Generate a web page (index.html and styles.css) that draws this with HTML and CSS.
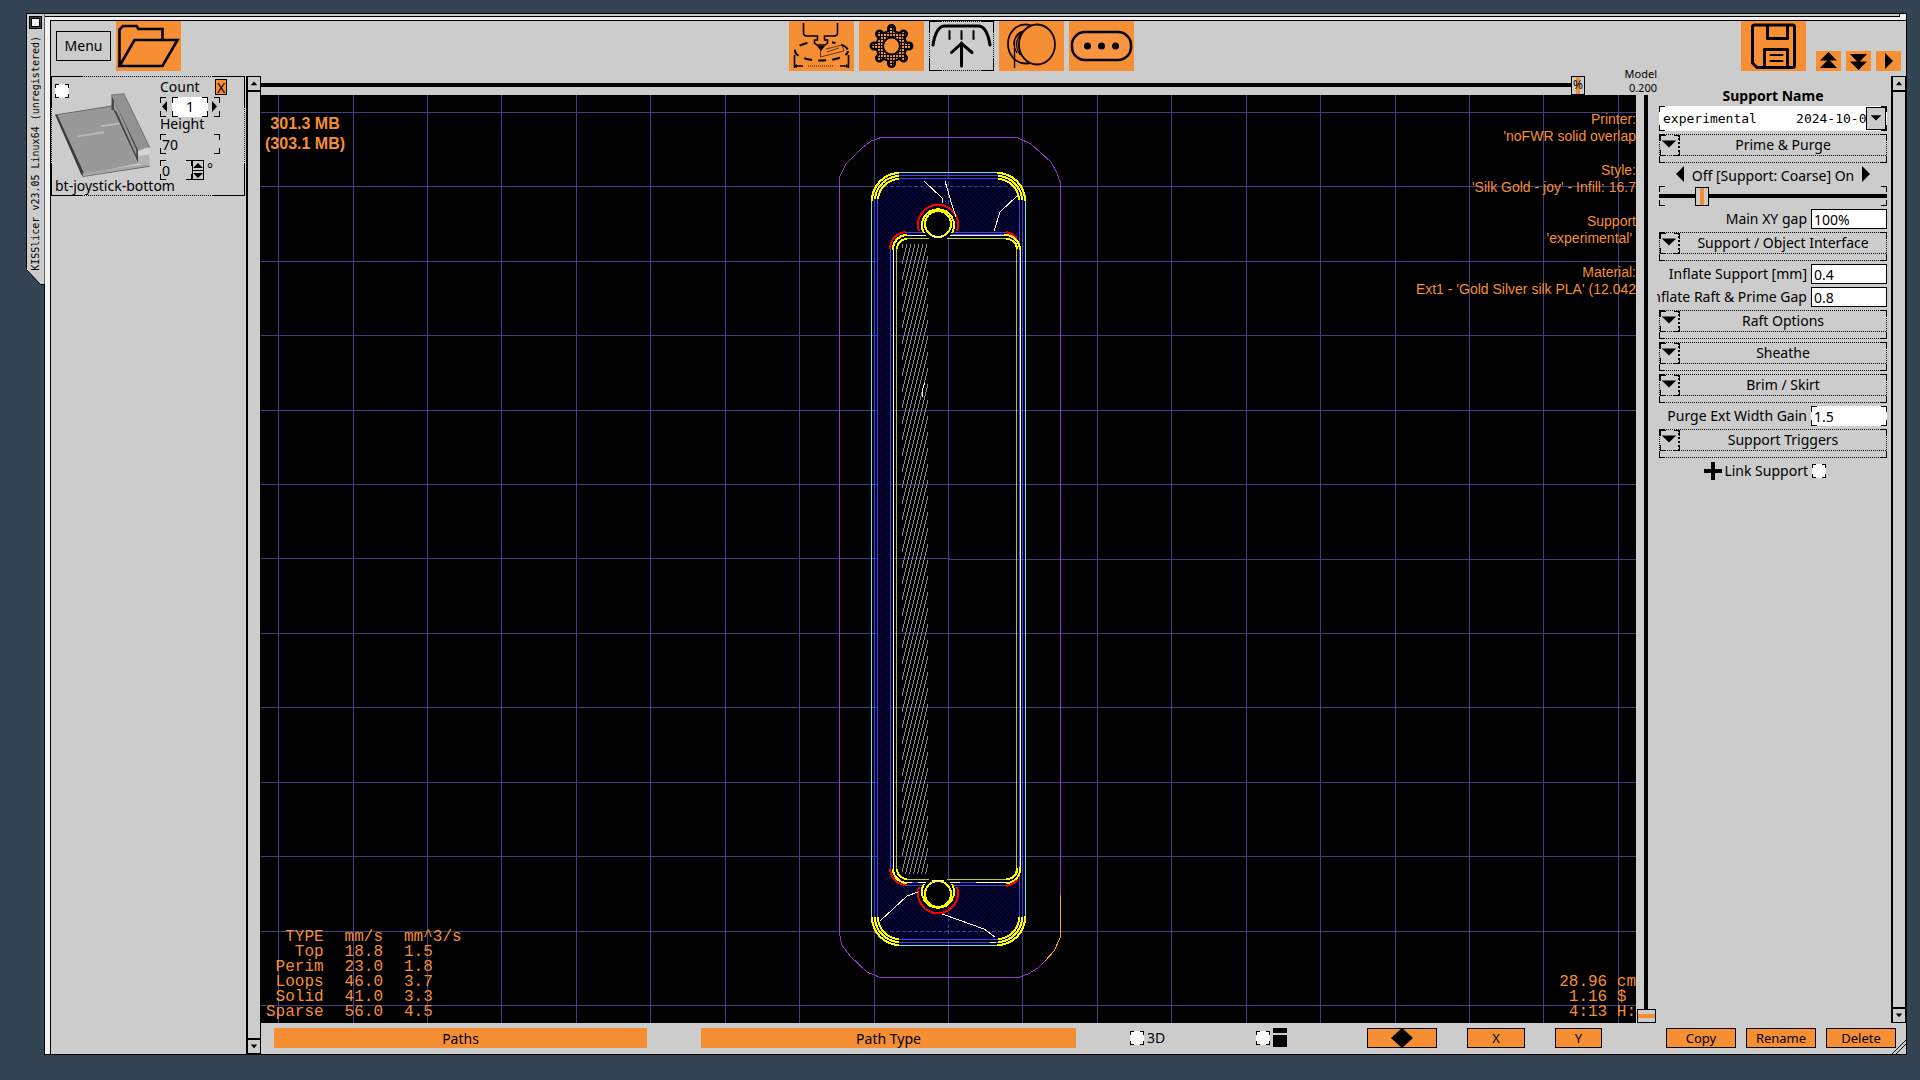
FILE: index.html
```html
<!DOCTYPE html>
<html lang="en">
  <head>
    <meta charset="UTF-8" />
    <meta name="viewport" content="width=device-width, initial-scale=1.0" />
    <title>KISSlicer v23.05 Linux64 (unregistered)</title>
    <link rel="stylesheet" href="styles.css">
  </head>
  <body>
    <div class="tab">
      <svg class="tab-shape" width="19" height="272" viewBox="0 0 19 272">
        <path d="M.5 .5H19V271.5H14.5L.5 256.5Z" fill="#ccc" stroke="#000" />
      </svg>
      <button class="tab-close" aria-label="Close window"></button>
      <div class="tab-title">KISSlicer v23.05 Linux64 (unregistered)</div>
    </div>

    <div class="window">
      <div class="strip"></div>
      <div class="content">
        <header class="toolbar">
          <button class="menu">Menu</button>
          <button class="tool" aria-label="Open">
            <svg viewBox="0 0 65 50" fill="none" stroke="#000" stroke-width="2.6">
              <path d="M3.5 45V8.5L7 5H20.5L22.5 8H46.5V19" />
              <path d="M18.5 19H61.5L46.5 45H3.5Z" />
            </svg>
          </button>

          <nav class="tabs">
            <button class="tool" aria-label="Printer">
              <svg viewBox="0 0 65 50" fill="none" stroke="#000" stroke-width="1.6">
                <ellipse cx="32.5" cy="30" rx="26.5" ry="9.5" stroke-width="2" stroke-dasharray="8 6" stroke-dashoffset="3" />
                <rect x="22" y="14" width="21" height="9" fill="#f68e33" stroke="none" />
                <path d="M14.5 2V12Q14.5 15 18 15H28.5V19H25.5V22L28 24H36L38.5 22V19H35.5V15H45Q48.5 15 48.5 12V2" />
                <path d="M28 25H36L32 30Z" fill="#000" stroke="none" />
                <path d="M37 28L53 24L55 30L31.5 36V28M38 31L50 27" stroke-width=".6" />
                <path d="M5.5 34V47M59.5 34V47M5.5 45H14M51 45H59.5" />
                <path d="M8 43V47L5 45ZM57 43V47L60 45Z" fill="#000" stroke="none" />
                <path d="M19 45H45" stroke="#8a5020" stroke-width="2" stroke-dasharray="1 1" />
              </svg>
            </button>
            <button class="tool" aria-label="Settings">
              <svg viewBox="0 0 65 50">
                <defs>
                  <pattern id="mesh" width="3" height="3" patternUnits="userSpaceOnUse">
                    <rect width="3" height="3" fill="#f68e33" />
                    <path d="M0 .5H3M.5 0V3" stroke="#000" />
                  </pattern>
                </defs>
                <g stroke="#000" stroke-width="9" stroke-linecap="round">
                  <path d="M32.5 7.5V42.5M15 25H50M20.5 13L44.5 37M20.5 37L44.5 13" />
                  <circle cx="32.5" cy="25" r="11.5" />
                </g>
                <g stroke="url(#mesh)" stroke-width="4" stroke-linecap="round" fill="url(#mesh)">
                  <path d="M32.4 7.5L32.6 42.5M15 24.9L50 25.1M20.5 13L44.5 37M20.5 37L44.5 13" />
                  <circle cx="32.5" cy="25" r="12" />
                </g>
                <circle cx="32.5" cy="25" r="8.5" fill="#f68e33" stroke="#000" stroke-width="2" />
              </svg>
            </button>
            <button class="tool tool-active frame" aria-label="Support">
              <svg viewBox="0 0 65 50" fill="none" stroke="#000" stroke-width="3" stroke-linecap="round">
                <path d="M4 24Q7 5 16 5H49Q58 5 61 24" />
                <path d="M20.5 10V18M32.5 10V18M44.5 10V18" stroke-width="2" />
                <path d="M32.5 22V45M22.5 31.5L32.5 22.5L43 31.5" />
              </svg>
            </button>
            <button class="tool" aria-label="Material">
              <svg viewBox="0 0 65 50" fill="none" stroke="#100500" stroke-width="1.8">
                <ellipse cx="26.5" cy="23" rx="17.5" ry="19.5" />
                <path d="M27 10Q12 18 21 34M28 10Q15 20 23 35M26 10Q9 17 18 32M15.5 47V20Q17 11 26 10" stroke-width="1.4" />
                <ellipse cx="38" cy="23.5" rx="18" ry="20" fill="#f68e33" />
              </svg>
            </button>
            <button class="tool" aria-label="More">
              <svg viewBox="0 0 65 50">
                <rect x="3" y="11" width="59" height="28" rx="13" fill="#f79545" stroke="#000" stroke-width="2.5" />
                <circle cx="18.5" cy="25" r="3.5" />
                <circle cx="32.5" cy="25" r="3.5" />
                <circle cx="46.5" cy="25" r="3.5" />
              </svg>
            </button>
          </nav>

          <button class="tool" aria-label="Save">
            <svg viewBox="0 0 65 50" fill="none" stroke="#000" stroke-width="3" stroke-linejoin="round">
              <path d="M13.5 4H51.5Q53.5 4 53.5 6V44.5Q53.5 46.5 51.5 46.5H16L11.5 42V6Q11.5 4 13.5 4Z" />
              <path d="M26.5 4V17.5H46.5V4M23.5 46V28.5H46.5V46" />
              <path d="M29.5 34H41.5M29.5 40H41.5" stroke-width="2" stroke-linecap="round" />
            </svg>
          </button>
          <div class="steps">
            <button aria-label="Collapse all"><svg viewBox="0 0 25 20"><path d="M12.5 1L21 9.5H4ZM12.5 8L21 17H4Z" /></svg></button>
            <button aria-label="Expand all"><svg viewBox="0 0 25 20"><path d="M12.5 19L21 10.5H4ZM12.5 12L21 3H4Z" /></svg></button>
            <button aria-label="Next"><svg viewBox="0 0 25 20"><path d="M9 2L17 10L9 18Z" /></svg></button>
          </div>
        </header>

        <div class="panes">
          <section class="objects">
            <div class="card frame">
              <div class="card-pic">
                <input type="checkbox" class="check" aria-label="Select bt-joystick-bottom">
                <svg class="part" viewBox="165 272 290 256">
                  <path d="M168 342L335 314L412 486L248 520Z" fill="#999" />
                  <path d="M166 341L336 314" stroke="#666" stroke-width="3" />
                  <path d="M165 339L172 341L252 516L248 525L243 518Z" fill="#3a3a3a" />
                  <path d="M248 514L448 486V493L248 525Z" fill="#a8a8a8" />
                  <path d="M248 525L448 494" stroke="#666" stroke-width="3" />
                  <path d="M232 405L312 392M303 374L370 364" stroke="#bbb" stroke-width="5" />
                  <path d="M334 282L346 286L414 446V486L340 326H334Z" fill="#444" />
                  <path d="M341 296L408 445V462L349 330L341 324Z" fill="#999" />
                  <path d="M333 281L371 277L448 438L414 446Z" fill="#929292" />
                  <path d="M333 281L371 277L448 438" fill="none" stroke="#777" stroke-width="3" />
                  <path d="M413 448L446 437L448 490L416 487Z" fill="#b4b4b4" />
                  <path d="M413 450L440 438L448 444V458L414 464Z" fill="#d4d4d4" />
                </svg>
              </div>
              <div class="card-form">
                <div class="count-line">
                  <label for="count">Count</label>
                  <button class="remove">X</button>
                </div>
                <div class="stepper corners">
                  <button aria-label="Fewer"><svg viewBox="0 0 12 20"><path d="M7 4V15L2 9.5Z" /></svg></button>
                  <input id="count" class="corners" value="1">
                  <button aria-label="More copies"><svg viewBox="0 0 12 20"><path d="M4 4V15L9 9.5Z" /></svg></button>
                </div>
                <label class="height-label" for="height">Height</label>
                <input id="height" class="plain corners" value="70">
                <div class="angle">
                  <input class="plain corners" value="0" aria-label="Rotation">
                  <span class="updown">
                    <button aria-label="Rotate up"><svg viewBox="0 0 10 9"><path d="M5 2L10 7H0Z" /></svg></button>
                    <button aria-label="Rotate down"><svg viewBox="0 0 10 9"><path d="M5 7L10 2H0Z" /></svg></button>
                  </span>
                  <span class="degree">°</span>
                </div>
              </div>
              <div class="card-name">bt-joystick-bottom</div>
            </div>
          </section>

          <div class="scroll">
            <button aria-label="Scroll up"><svg viewBox="0 0 13 14"><path d="M6.5 5L10 9H3Z" /></svg></button>
            <button aria-label="Scroll down"><svg viewBox="0 0 13 14"><path d="M6.5 9L10 5H3Z" /></svg></button>
          </div>

          <main class="viewer">
            <div class="progress">
              <div class="progress-slider">
                <input type="range" class="slider" min="0" max="100" value="100" aria-label="Layer progress">
                <span class="percent">%</span>
              </div>
              <div class="layer-label">Model<br>0.200</div>
            </div>

            <div class="stage">
              <div class="canvas">
                <svg class="drawing" viewBox="261 95 1375 928" preserveAspectRatio="xMidYMid slice" fill="none" shape-rendering="crispEdges">
                  <defs>
                    <pattern id="infill" width="4" height="4" patternUnits="userSpaceOnUse">
                      <rect width="4" height="4" fill="#000008" />
                      <path d="M0 .5H1M1 1.5H2M2 2.5H3M3 3.5H4" stroke="#00008c" />
                    </pattern>
                    <pattern id="hatch" width="4" height="16" patternUnits="userSpaceOnUse">
                      <path d="M3.5 0V4M2.5 4V8M1.5 8V12M.5 12V16" stroke="#888" />
                    </pattern>
                  </defs>

                  <!-- bed grid -->
                  <path class="grid" d="M278.5 95V1023M353.5 95V1023M427.5 95V1023M501.5 95V1023M576.5 95V1023M650.5 95V1023M725.5 95V1023M799.5 95V1023M874.5 95V1023M948.5 95V1023M1022.5 95V1023M1097.5 95V1023M1171.5 95V1023M1246.5 95V1023M1320.5 95V1023M1395.5 95V1023M1469.5 95V1023M1543.5 95V1023M1618.5 95V1023" />
                  <path class="grid" d="M261 112.5H1636M261 186.5H1636M261 261.5H1636M261 335.5H1636M261 410.5H1636M261 484.5H1636M261 558.5H949V559.5H1636M261 633.5H1636M261 707.5H1636M261 782.5H1636M261 856.5H1636M261 931.5H1636M261 1005.5H1636" />

                  <!-- skirt -->
                  <path d="M1045 961L1038 968L1028 974L1019 977.5H880L867 972L850 956L842 945L839.5 934V177L846 164L862 148L871 141L881 137.5H1017L1031 144L1051 162L1057 173L1060.5 183V895" stroke="#9932cc" />
                  <path d="M1060.5 895V937L1054 951L1045 961" stroke="#ffa500" />

                  <!-- solid infill around the pocket -->
                  <path fill="url(#infill)" fill-rule="evenodd" d="M899 179H998A21 21 0 0 1 1019 200V917A22 22 0 0 1 998 939H899A21 21 0 0 1 878 917V200A21 21 0 0 1 899 179ZM906 233A15 15 0 0 0 891 248V869A16 16 0 0 0 906 885H1004A15 15 0 0 0 1019 869V248A15 15 0 0 0 1004 233Z" />
                  <path d="M884 186.5H1016M884 931.5H1012M948.5 182V236M948.5 888V936" stroke="#404088" stroke-dasharray="4 2" />

                  <!-- outer walls -->
                  <rect x="871.5" y="172.5" width="154" height="773" rx="28" stroke="#60e8f8" />
                  <rect x="874.5" y="175.5" width="148" height="767" rx="25" stroke="#4040ff" />
                  <rect x="877.5" y="178.5" width="142" height="761" rx="22" stroke="#4040ff" />
                  <g stroke="#ff0" stroke-width="2">
                    <path d="M872 201A28 28 0 0 1 899 173M875 199A25 25 0 0 1 899 176M878 199A22 22 0 0 1 899 179" />
                    <path d="M997 173A28 28 0 0 1 1025 201M998 176A25 25 0 0 1 1022 200M998 179A22 22 0 0 1 1019 200" />
                    <path d="M872 917A28 28 0 0 0 899 945M875 917A25 25 0 0 0 899 942M878 917A22 22 0 0 0 899 939" />
                    <path d="M1025 916A28 28 0 0 1 997 945M1022 917A25 25 0 0 1 998 942M1019 917A22 22 0 0 1 998 939" />
                  </g>

                  <!-- pocket walls -->
                  <path d="M890.5 248V870M905 232.5H1007M905 885.5H1007" stroke="#4040ff" />
                  <rect x="893.5" y="235.5" width="127" height="647" rx="14" stroke="#fff" />
                  <rect x="896.5" y="238.5" width="120" height="641" rx="11" stroke="#b0d020" />
                  <path d="M950 234.5H1006M960 882.5H976M912 882.5H918" stroke="#4040ff" />
                  <g stroke="#ff0" stroke-width="2">
                    <path d="M893 250A14 14 0 0 1 907 235M897 249A10 10 0 0 1 907 239" />
                    <path d="M1004 235A15 15 0 0 1 1020 250M1006 239A10 10 0 0 1 1017 249" />
                    <path d="M893 869A14 14 0 0 0 907 883M897 869A10 10 0 0 0 907 879" />
                    <path d="M1006 883A14 14 0 0 0 1020 867M1006 879A10 10 0 0 0 1017 868" />
                  </g>
                  <path d="M890 249A17 17 0 0 1 906 232M1006 232L1012 234L1017 238M890 869A17 17 0 0 0 906 885M1006 886L1012 884L1018 880" stroke="#f00" stroke-width="2" />

                  <!-- support fill -->
                  <rect x="902" y="244" width="26" height="630" fill="url(#hatch)" />

                  <!-- screw holes -->
                  <circle cx="938" cy="224" r="17" fill="#000" />
                  <path d="M919 231A20 20 0 1 1 957 231" stroke="#f00" stroke-width="2" />
                  <path d="M924 233A16 16 0 1 1 952 233" stroke="#ff0" stroke-width="2" />
                  <circle cx="938" cy="224" r="13" stroke="#ff0" stroke-width="2" />
                  <path d="M932 236.5H944" stroke="#fff" />
                  <circle cx="938" cy="894" r="17" fill="#000" />
                  <path d="M919 887A20 20 0 1 0 957 887" stroke="#f00" stroke-width="2" />
                  <path d="M924 884A16 16 0 1 0 952 884" stroke="#ff0" stroke-width="2" />
                  <circle cx="938" cy="894" r="13" stroke="#ff0" stroke-width="2" />
                  <path d="M932 880.5H944" stroke="#fff" />

                  <!-- travel moves -->
                  <path d="M924 181L942 198V203M945 181L952 205L956 217M1017 196L1000 212L994 231M925 383L922 390V397M880 921L907 896L918 892M942 914L984 929L995 937M990 942H996" stroke="#fff" />
                </svg>

                <div class="memory">301.3 MB<br>(303.1 MB)</div>

                <div class="profile">
                  <p>Printer:<br>'noFWR solid overlap</p>
                  <p>Style:<br>'Silk Gold - joy' - Infill: 16.7</p>
                  <p>Support<br>'experimental'&nbsp;</p>
                  <p>Material:<br>Ext1 - 'Gold Silver silk PLA' (12.042</p>
                </div>

                <table class="speeds">
                  <tr><th>TYPE</th><th>mm/s</th><th>mm^3/s</th></tr>
                  <tr><td>Top</td><td>18.8</td><td>1.5</td></tr>
                  <tr><td>Perim</td><td>23.0</td><td>1.8</td></tr>
                  <tr><td>Loops</td><td>46.0</td><td>3.7</td></tr>
                  <tr><td>Solid</td><td>41.0</td><td>3.3</td></tr>
                  <tr><td>Sparse</td><td>56.0</td><td>4.5</td></tr>
                </table>

                <div class="totals">28.96 cm<br>&nbsp;1.16 $<br>&nbsp;4:13 H:</div>
              </div>
              <input type="range" class="slider slider-vertical" min="0" max="100" value="100" aria-label="Layer height">
            </div>

            <footer class="view-bar">
              <button class="wide">Paths</button>
              <button class="wide">Path Type</button>
              <div class="toggle">
                <input type="checkbox" class="check" id="view3d">
                <label for="view3d">3D</label>
              </div>
              <div class="toggle">
                <input type="checkbox" class="check" id="split" aria-label="Split view">
                <svg class="split-icon" width="14" height="20" viewBox="0 0 14 20"><path d="M0 0H14V5H0ZM0 7H14V19H0Z" /></svg>
              </div>
              <button class="btn btn-diamond" aria-label="Reset view"><svg viewBox="0 0 22 20"><path d="M11 0L22 10L11 20L0 10Z" /></svg></button>
              <button class="btn btn-x">X</button>
              <button class="btn btn-y">Y</button>
            </footer>
          </main>

          <aside class="settings">
            <div class="settings-body">
              <form class="fields">
                <label class="title" for="profile">Support Name</label>
                <div class="combo">
                  <select id="profile" class="corners">
                    <option>experimental&nbsp;&nbsp;&nbsp;&nbsp;&nbsp;2024-10-0</option>
                  </select>
                  <span class="combo-arrow"><svg viewBox="0 0 20 24"><path d="M4 8H16L10 14Z" /></svg></span>
                </div>

                <div class="section frame">
                  <button type="button"><span class="fold frame"><svg viewBox="0 0 20 21"><path d="M2 6H18L10 14Z" /></svg></span><span>Prime &amp; Purge</span></button>
                </div>
                <div class="level">
                  <button type="button" aria-label="Less"><svg viewBox="0 0 10 17"><path d="M9 0V16L1 8Z" /></svg></button>
                  <label for="level">Off [Support: Coarse] On</label>
                  <button type="button" aria-label="More support"><svg viewBox="0 0 10 17"><path d="M1 0V16L9 8Z" /></svg></button>
                </div>
                <input type="range" id="level" class="slider slider-level corners" min="0" max="100" value="17">
                <div class="field">
                  <label for="xygap">Main XY gap</label>
                  <input id="xygap" value="100%">
                </div>

                <div class="section frame">
                  <button type="button"><span class="fold frame"><svg viewBox="0 0 20 21"><path d="M2 6H18L10 14Z" /></svg></span><span>Support / Object Interface</span></button>
                </div>
                <div class="field">
                  <label for="inflate">Inflate Support [mm]</label>
                  <input id="inflate" value="0.4">
                </div>
                <div class="field">
                  <label for="raftgap">Inflate Raft &amp; Prime Gap</label>
                  <input id="raftgap" value="0.8">
                </div>

                <div class="section frame">
                  <button type="button"><span class="fold frame"><svg viewBox="0 0 20 21"><path d="M2 6H18L10 14Z" /></svg></span><span>Raft Options</span></button>
                </div>
                <div class="section frame">
                  <button type="button"><span class="fold frame"><svg viewBox="0 0 20 21"><path d="M2 6H18L10 14Z" /></svg></span><span>Sheathe</span></button>
                </div>
                <div class="section frame">
                  <button type="button"><span class="fold frame"><svg viewBox="0 0 20 21"><path d="M2 6H18L10 14Z" /></svg></span><span>Brim / Skirt</span></button>
                </div>
                <div class="field">
                  <label for="purge">Purge Ext Width Gain</label>
                  <input id="purge" class="bare corners" value="1.5">
                </div>

                <div class="section frame">
                  <button type="button"><span class="fold frame"><svg viewBox="0 0 20 21"><path d="M2 6H18L10 14Z" /></svg></span><span>Support Triggers</span></button>
                </div>
                <div class="field link">
                  <label for="link"><svg width="18" height="18" viewBox="0 0 18 18"><path d="M7 0H11V7H18V11H11V18H7V11H0V7H7Z" /></svg>Link Support</label>
                  <input type="checkbox" class="check" id="link">
                </div>
              </form>

              <div class="scroll">
                <button aria-label="Scroll up"><svg viewBox="0 0 13 14"><path d="M6.5 5L10 9H3Z" /></svg></button>
                <button aria-label="Scroll down"><svg viewBox="0 0 13 14"><path d="M6.5 9L10 5H3Z" /></svg></button>
              </div>
            </div>

            <footer class="profile-bar">
              <button class="btn">Copy</button>
              <button class="btn">Rename</button>
              <button class="btn">Delete</button>
              <svg class="resize" width="14" height="14" viewBox="0 0 14 14"><path d="M0 14L14 0M4 14L14 4" stroke="#000" /></svg>
            </footer>
          </aside>
        </div>
      </div>
    </div>
  </body>
</html>
```

FILE: styles.css
```css
* {
  margin: 0;
  padding: 0;
  box-sizing: border-box;
}

:root {
  --orange: #f68e33;
  --gray: #ccc;
  --ink: linear-gradient(#000, #000);
}

body {
  display: flex;
  min-height: 100vh;
  padding: 13px 13px 25px 26px;
  background: #344454;
  color: #000;
  font-family: "Noto Sans", sans-serif;
  font-size: 14px;
  line-height: 18px;
}

button,
input,
select {
  font: inherit;
  color: inherit;
  border: 0;
  border-radius: 0;
  background: none;
}

svg {
  display: block;
}

/* solid corners, used alone or over a dotted border */
.corners,
.frame,
.check {
  --c: 6px;
  background-image: var(--ink), var(--ink), var(--ink), var(--ink),
    var(--ink), var(--ink), var(--ink), var(--ink);
  background-repeat: no-repeat;
  background-origin: border-box;
  background-position: 0 0, 0 0, 100% 0, 100% 0, 0 100%, 0 100%, 100% 100%, 100% 100%;
  background-size: var(--c) 1px, 1px var(--c), var(--c) 1px, 1px var(--c),
    var(--c) 1px, 1px var(--c), var(--c) 1px, 1px var(--c);
}

.frame {
  border: 1px dotted #000;
}

.check {
  --c: 4px;
  appearance: none;
  width: 14px;
  height: 14px;
  background-color: #fff;
}

/* window frame */
.tab {
  position: relative;
  width: 18px;
  height: 272px;
  padding: 3px;
  flex: none;
}

.tab-shape {
  position: absolute;
  top: 0;
  left: 0;
}

.tab-close {
  position: relative;
  display: block;
  width: 13px;
  height: 13px;
  border: 1px solid #000;
  background: #f2f2f2;
  box-shadow: inset 0 0 0 1px #344454, inset 0 0 0 2px #000;
}

.tab-title {
  position: relative;
  margin-top: 7px;
  width: 13px;
  font-family: "DejaVu Sans Mono", monospace;
  font-size: 10px;
  line-height: 13px;
  white-space: nowrap;
  writing-mode: vertical-rl;
  transform: rotate(180deg);
}

.window {
  flex: 1;
  min-width: 0;
  display: flex;
  flex-direction: column;
  border: 1px solid #000;
  background: #f2f2f2;
}

.strip {
  height: 3px;
  margin-right: 6px;
  background: var(--gray);
  border-right: 1px solid #000;
  border-bottom: 1px solid #000;
}

.content {
  flex: 1;
  display: flex;
  flex-direction: column;
  margin: 3px 0 0 5px;
  border-top: 1px solid #000;
  border-left: 1px solid #000;
  background: var(--gray);
}

/* toolbar */
.toolbar {
  display: flex;
  align-items: center;
  gap: 5px;
  padding: 0 5px;
}

.menu {
  width: 55px;
  height: 30px;
  border: 1px solid #000;
}

.tool {
  width: 65px;
  height: 50px;
  background-color: var(--orange);
}

.tool svg {
  width: 65px;
  height: 50px;
}

.tool-active {
  --c: 12px;
  background-color: transparent;
}

.tool-active svg {
  margin: -1px;
}

.tabs {
  display: flex;
  gap: 5px;
  margin: 0 auto;
}

.steps {
  display: flex;
  gap: 5px;
  align-self: flex-end;
  margin-left: 5px;
}

.steps button {
  width: 25px;
  height: 20px;
  background: var(--orange);
}

.panes {
  flex: 1;
  display: flex;
  padding-top: 5px;
}

/* object list */
.objects {
  width: 195px;
  flex: none;
}

.card {
  --c: 32px;
  display: grid;
  grid-template-columns: 105px 1fr;
  grid-template-rows: 102px 1fr;
  width: 194px;
  height: 120px;
  padding: 2px 3px;
}

.card-pic {
  padding-top: 5px;
}

.part {
  width: 97px;
  margin-top: -6px;
}

.card-pic .check {
  display: block;
}

.count-line {
  display: flex;
  height: 18px;
}

.count-line label {
  line-height: 16px;
  width: 55px;
}

.remove {
  width: 12px;
  height: 16px;
  border: 1px solid #000;
  background: var(--orange);
  line-height: 16px;
}

.stepper {
  display: flex;
  width: 60px;
  height: 20px;
}

.stepper button {
  width: 12px;
}

.stepper input {
  width: 36px;
  background-color: #fff;
  text-align: center;
}

.height-label {
  display: block;
  height: 17px;
  line-height: 13px;
}

.plain {
  display: block;
  width: 60px;
  height: 20px;
  padding: 0 0 0 2px;
}

.angle {
  display: flex;
  margin-top: 6px;
}

.angle .plain {
  width: 32px;
}

.updown {
  width: 12px;
  border: 1px solid #000;
}

.updown button {
  display: block;
  width: 10px;
  height: 9px;
}

.updown button + button {
  border-top: 1px solid #000;
}

.degree {
  margin-left: 3px;
}

.card-name {
  grid-column: 1 / 3;
  line-height: 10px;
}

.scroll {
  width: 15px;
  flex: none;
  display: flex;
  flex-direction: column;
  justify-content: space-between;
  border: 1px solid #000;
  border-left-width: 2px;
}

.scroll button {
  height: 15px;
  border-bottom: 2px solid #000;
}

.scroll button:last-child {
  border-bottom: 0;
  border-top: 2px solid #000;
}

.scroll svg {
  width: 12px;
}

/* viewer */
.viewer {
  flex: 1;
  min-width: 0;
  display: flex;
  flex-direction: column;
}

.progress {
  display: flex;
  height: 19px;
  align-items: flex-end;
}

.progress-slider {
  position: relative;
  flex: 1;
  height: 19px;
}

.slider {
  appearance: none;
  display: block;
  width: 100%;
  height: 19px;
}

.slider::-webkit-slider-runnable-track {
  height: 19px;
  background: linear-gradient(#000, #000) 0 7px / 100% 4px no-repeat;
}

.slider::-webkit-slider-thumb {
  appearance: none;
  width: 14px;
  height: 19px;
  border: 1px solid #000;
  background: linear-gradient(90deg, var(--gray) 4px, var(--orange) 4px 8px, var(--gray) 8px);
}

.percent {
  position: absolute;
  top: 0;
  right: 2px;
  font-size: 12px;
  pointer-events: none;
}

.layer-label {
  width: 72px;
  font-size: 11px;
  line-height: 14px;
  text-align: right;
}

.stage {
  flex: 1;
  display: flex;
}

.canvas {
  position: relative;
  flex: 1;
  overflow: hidden;
  background: #000;
  color: var(--orange);
}

.drawing {
  position: absolute;
  width: 100%;
  height: 100%;
}

.grid {
  stroke: #404088;
}

.slider-vertical {
  width: 21px;
  height: auto;
  writing-mode: vertical-lr;
}

.slider-vertical::-webkit-slider-runnable-track {
  width: 21px;
  height: 100%;
  background: linear-gradient(#000, #000) 8px 0 / 4px 100% no-repeat;
}

.slider-vertical::-webkit-slider-thumb {
  width: 19px;
  height: 14px;
  margin-left: 1px;
  background: linear-gradient(var(--gray) 4px, var(--orange) 4px 8px, var(--gray) 8px);
}

.memory {
  position: absolute;
  top: 19px;
  left: 4px;
  font: bold 16px/20px "Liberation Sans", sans-serif;
  text-align: center;
}

.profile {
  position: absolute;
  top: 16px;
  right: 0;
  font: 14px/17px "Liberation Sans", sans-serif;
  text-align: right;
  white-space: nowrap;
}

.profile p + p {
  margin-top: 17px;
}

.speeds,
.totals {
  position: absolute;
  font: 16px/15px "Liberation Mono", monospace;
}

.speeds {
  left: 5px;
  bottom: 3px;
  border-spacing: 0;
}

.speeds th,
.speeds td {
  padding-right: 21px;
  font-weight: normal;
  text-align: left;
}

.speeds th:first-child,
.speeds td:first-child {
  text-align: right;
}

.totals {
  right: 0;
  bottom: 3px;
  white-space: nowrap;
}

.view-bar {
  display: grid;
  grid-template-columns: 427fr 429fr 126fr 111fr 100fr 88fr 102fr;
  height: 31px;
  padding: 5px 0 0 13px;
}

.wide {
  height: 20px;
  margin-right: 54px;
  padding-top: 1px;
  background: var(--orange);
}

.toggle {
  display: flex;
  align-items: center;
  height: 20px;
  gap: 3px;
}

.btn {
  height: 20px;
  border: 1px solid #000;
  background: var(--orange);
  font-size: 13px;
}

.btn-diamond {
  width: 70px;
}

.btn-diamond svg {
  height: 20px;
  margin: -1px auto;
}

.btn-x {
  width: 58px;
}

.btn-y {
  width: 47px;
}

/* settings */
.settings {
  width: 249px;
  flex: none;
  display: flex;
  flex-direction: column;
}

.settings-body {
  flex: 1;
  display: flex;
}

.fields {
  flex: 1;
  min-width: 0;
  display: flex;
  flex-direction: column;
  gap: 3px;
  padding: 11px 4px 0 2px;
}

.title {
  height: 16px;
  font-weight: bold;
  text-align: center;
}

.combo {
  position: relative;
  height: 25px;
}

.combo select {
  appearance: none;
  width: 100%;
  height: 25px;
  padding-left: 4px;
  background-color: #fff;
  font-family: "DejaVu Sans Mono", monospace;
  font-size: 13px;
}

.combo-arrow {
  position: absolute;
  top: 1px;
  right: 1px;
  width: 20px;
  height: 23px;
  border: 1px solid #000;
  background: var(--gray);
  pointer-events: none;
}

.section {
  height: 29px;
}

.section button {
  display: flex;
  width: 100%;
  height: 21px;
  border-bottom: 1px dotted #000;
  line-height: 20px;
}

.section button > span:last-child {
  flex: 1;
}

.fold {
  width: 20px;
  height: 21px;
  border-width: 0 2px 0 0;
}

.level {
  display: flex;
  justify-content: center;
  gap: 7px;
  height: 17px;
  line-height: 19px;
}

.level button {
  width: 10px;
}

.slider-level {
  height: 20px;
}

.field {
  display: flex;
  gap: 4px;
  height: 20px;
  margin-left: -2px;
}

.field label {
  flex: 1;
  display: flex;
  justify-content: flex-end;
  align-items: center;
  gap: 2px;
  overflow: hidden;
  white-space: nowrap;
}

.field input {
  width: 76px;
  padding: 2px 0 0 2px;
  border: 1px solid #000;
  background-color: #fff;
}

.field .bare {
  border-color: transparent;
}

.link {
  align-items: center;
}

.link label {
  flex: none;
  width: 151px;
}

.field .check {
  width: 14px;
  padding: 0;
  border: 0;
}

.profile-bar {
  position: relative;
  display: flex;
  justify-content: flex-end;
  gap: 10px;
  height: 31px;
  padding: 5px 10px 0 0;
}

.profile-bar .btn {
  width: 70px;
}

.resize {
  position: absolute;
  right: 0;
  bottom: 0;
}
```
